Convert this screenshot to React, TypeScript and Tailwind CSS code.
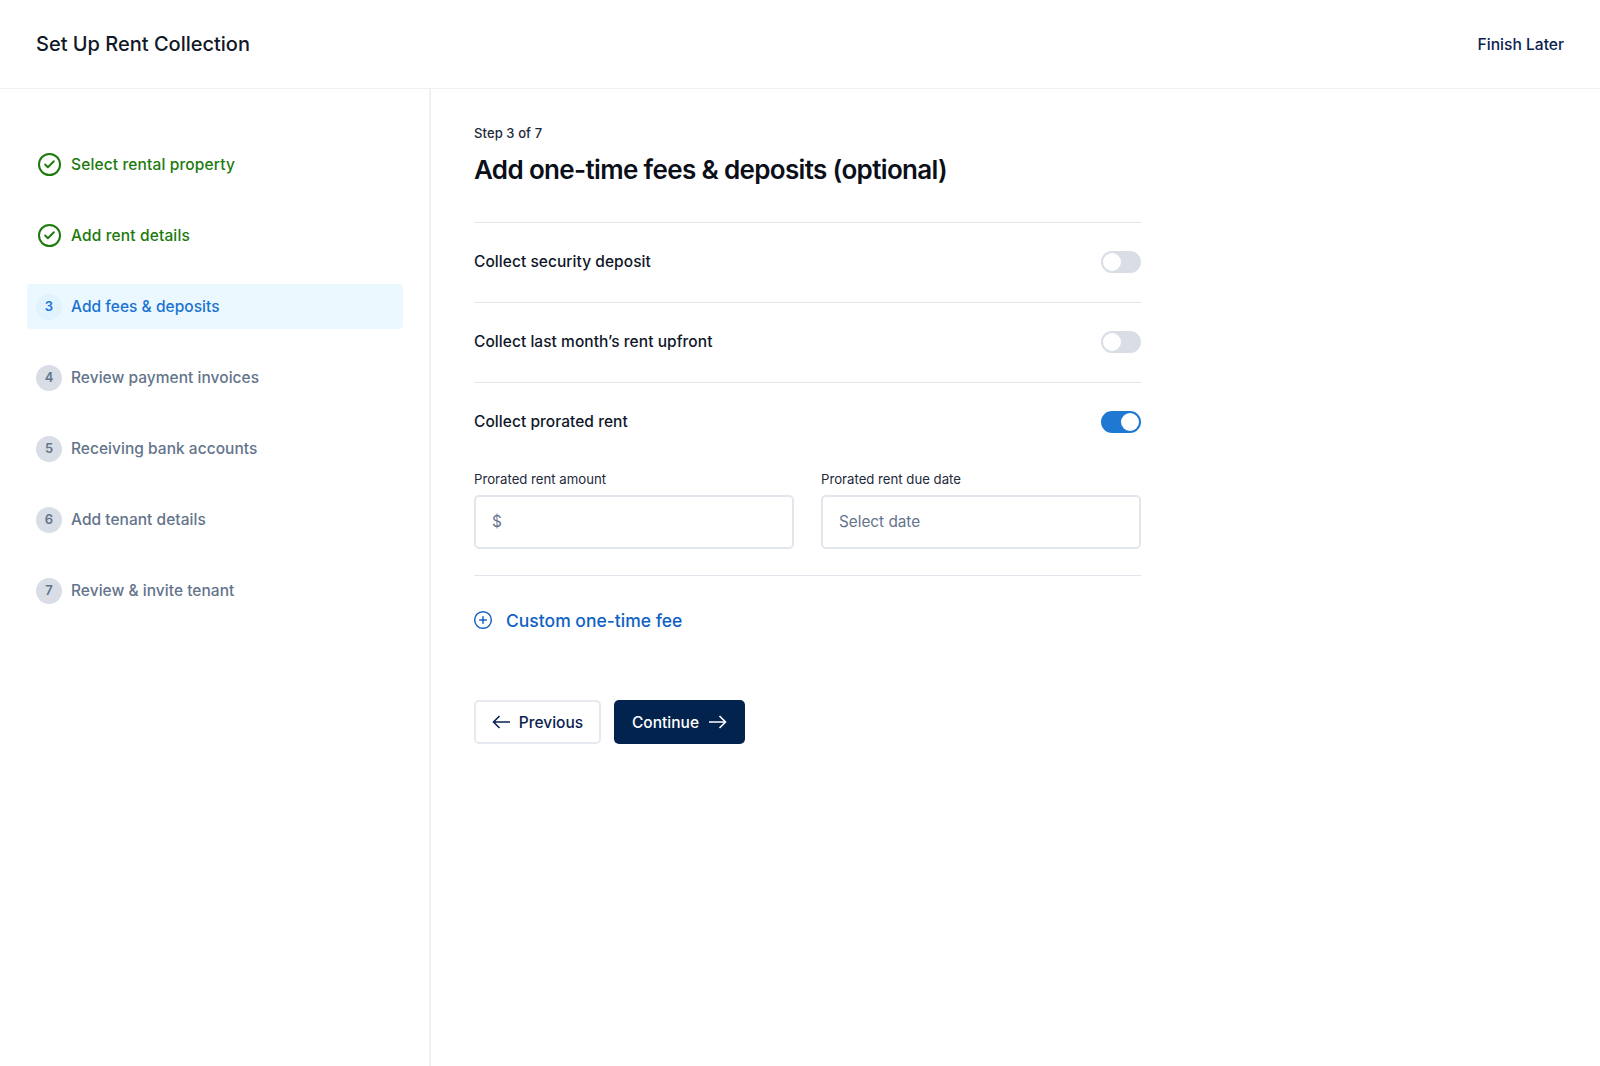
import { Check, CirclePlus } from 'lucide-react'

const steps = [
  { n: 1, label: 'Select rental property', state: 'done' },
  { n: 2, label: 'Add rent details', state: 'done' },
  { n: 3, label: 'Add fees & deposits', state: 'active' },
  { n: 4, label: 'Review payment invoices', state: 'todo' },
  { n: 5, label: 'Receiving bank accounts', state: 'todo' },
  { n: 6, label: 'Add tenant details', state: 'todo' },
  { n: 7, label: 'Review & invite tenant', state: 'todo' },
]

function Arrow({ left }: { left?: boolean }) {
  return (
    <svg width="18" height="14" viewBox="0 0 18 14" fill="none" stroke="currentColor" strokeWidth="1.6">
      <path d={left ? 'M18 7H1.5M7.5 1l-6 6 6 6' : 'M0 7h16.5M10.5 1l6 6-6 6'} />
    </svg>
  )
}

function StepRow({ n, label, state }: { n: number; label: string; state: string }) {
  if (state === 'done') {
    return (
      <div className="flex h-[45px] items-center gap-[9px] px-[9px] text-[15.5px] font-medium tracking-[0.14px] text-[#1c7a0c]">
        <span className="flex size-[26px] items-center justify-center">
          <span className="flex size-[23px] items-center justify-center rounded-full border-2 border-[#1c7a0c]">
            <Check size={13} strokeWidth={3.5} />
          </span>
        </span>
        <span className="pt-[1px]">{label}</span>
      </div>
    )
  }
  const active = state === 'active'
  return (
    <div
      className={`flex h-[45px] items-center gap-[9px] rounded-[4px] px-[9px] text-[15.5px] font-medium tracking-[0.03px] ${
        active ? 'bg-[#ebf8ff] text-[#1a73d1]' : 'text-[#64748b]'
      }`}
    >
      <span
        className={`flex size-[26px] items-center justify-center rounded-full text-[13px] font-semibold ${
          active ? 'bg-[#e1f3fe]' : 'bg-[#d8dde6]'
        }`}
      >
        {n}
      </span>
      <span className="pt-[1px]">{label}</span>
    </div>
  )
}

function Toggle({ on }: { on?: boolean }) {
  return (
    <div
      className={`flex h-[22px] w-10 items-center rounded-full border-2 ${
        on ? 'justify-end border-[#1f78d1] bg-[#1f78d1]' : 'border-[#d8dde6] bg-[#d8dde6]'
      }`}
    >
      <span className="size-[18px] rounded-full bg-white" />
    </div>
  )
}

function ToggleRow({ label, on }: { label: string; on?: boolean }) {
  return (
    <div className="flex h-[79px] items-center justify-between pb-px">
      <span className="text-[15.5px] font-medium tracking-[0.05px] text-[#0f172a]">{label}</span>
      <Toggle on={on} />
    </div>
  )
}

function Field({ label, placeholder }: { label: string; placeholder: string }) {
  return (
    <div className="flex-1">
      <div className="mb-[7px] text-[13.2px] leading-[18px] text-[#1e293b]">{label}</div>
      <div className="flex h-[54px] items-center rounded-[5px] border-2 border-[#e2e6ed] px-4 pt-px text-[15.3px] text-[#64748b]">
        {placeholder}
      </div>
    </div>
  )
}

export default function App() {
  return (
    <div className="flex h-[1066px] flex-col bg-white font-['Inter',sans-serif]">
      <header className="flex h-[89px] shrink-0 items-center justify-between border-b border-[#eef0f4] pl-9 pr-9">
        <h1 className="text-[20px] font-medium text-[#111827]">Set Up Rent Collection</h1>
        <button className="pt-[2px] text-[15.6px] font-medium text-[#0b2350]">Finish Later</button>
      </header>

      <div className="flex flex-1">
        <aside className="w-[431px] shrink-0 border-r-2 border-[#eef0f4] pl-[27px] pr-[26px] pt-[53px]">
          <div className="flex flex-col gap-[26px]">
            {steps.map((s) => (
              <StepRow key={s.n} {...s} />
            ))}
          </div>
        </aside>

        <main className="w-[710px] pl-[43px] pt-[35px]">
          <div className="text-[13px] font-medium leading-[18px] tracking-[0.1px] text-[#1e293b]">Step 3 of 7</div>
          <h2 className="mt-[10px] text-[26px] font-semibold leading-[36px] tracking-[-0.65px] text-[#0b0f19]">
            Add one-time fees &amp; deposits (optional)
          </h2>

          <div className="mt-[34px] border-t border-[#e2e6ed]">
            <ToggleRow label="Collect security deposit" />
          </div>
          <div className="border-t border-[#e2e6ed]">
            <ToggleRow label="Collect last month’s rent upfront" />
          </div>
          <div className="border-t border-[#e2e6ed]">
            <ToggleRow label="Collect prorated rent" on />
          </div>

          <div className="mt-[8px] flex gap-[27px] pb-[26px]">
            <Field label="Prorated rent amount" placeholder="$" />
            <Field label="Prorated rent due date" placeholder="Select date" />
          </div>

          <div className="border-t border-[#e2e6ed] pt-[32px]">
            <button className="-ml-px flex items-center gap-[13px] text-[17.5px] font-medium text-[#0f62c4]">
              <CirclePlus size={20} strokeWidth={1.75} className="-translate-y-px" />
              Custom one-time fee
            </button>
          </div>

          <div className="mt-[66px] flex gap-[13px]">
            <button className="flex h-[44px] w-[127px] items-center justify-center gap-[9px] rounded-[5px] border-2 border-[#e6e9ef] text-[15.5px] font-medium text-[#0b2350]">
              <Arrow left />
              Previous
            </button>
            <button className="flex h-[44px] w-[131px] items-center justify-center gap-[10px] rounded-[5px] bg-[#03234f] text-[15.5px] font-medium text-white">
              Continue
              <Arrow />
            </button>
          </div>
        </main>
      </div>
    </div>
  )
}
